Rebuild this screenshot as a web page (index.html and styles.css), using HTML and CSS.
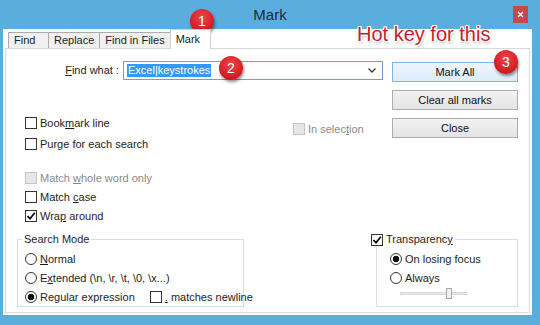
FILE: index.html
```html
<!DOCTYPE html>
<html lang="en">
<head>
    <meta charset="UTF-8">
    <title>Mark</title>
    <link rel="stylesheet" href="styles.css">
</head>
<body>
    <div class="window">
        <div class="titlebar">
            <span></span>
            <span class="title">Mark</span>
            <button class="close-btn" aria-label="Close">
                <svg width="7" height="7" viewBox="0 0 7 7"><path d="M1 1L6 6M6 1L1 6" stroke="#fff" stroke-width="1.4"/></svg>
            </button>
        </div>

        <div class="client">
            <div class="tabs">
                <div class="tab">Find</div>
                <div class="tab">Replace</div>
                <div class="tab">Find in Files</div>
                <div class="tab active">Mark</div>
            </div>

            <div class="panel">
                <div class="top">
                    <div class="main">
                        <div class="find-row">
                            <label class="find-label"><u>F</u>ind what :</label>
                            <div class="combo">
                                <span class="combo-sel">Excel|keystrokes</span>
                                <svg class="combo-arrow" width="8" height="5" viewBox="0 0 8 5"><path d="M0.5 0.5L4 4L7.5 0.5" fill="none" stroke="#333" stroke-width="1.3"/></svg>
                            </div>
                        </div>

                        <div class="opts-first">
                            <div class="opt-col">
                                <label class="check"><span class="box"></span><span>Book<u>m</u>ark line</span></label>
                                <label class="check"><span class="box"></span><span>Purge for each search</span></label>
                            </div>
                            <label class="check disabled in-sel"><span class="box"></span><span>In selec<u>t</u>ion</span></label>
                        </div>

                        <div class="opt-col opts-second">
                            <label class="check disabled"><span class="box"></span><span>Match <u>w</u>hole word only</span></label>
                            <label class="check"><span class="box"></span><span>Match <u>c</u>ase</span></label>
                            <label class="check checked"><span class="box"><svg width="10" height="10" viewBox="0 0 10 10"><path d="M1.5 5L4 7.8L8.8 1.8" fill="none" stroke="#000" stroke-width="1.7"/></svg></span><span>Wra<u>p</u> around</span></label>
                        </div>
                    </div>

                    <div class="actions">
                        <button class="btn default">Mark All</button>
                        <button class="btn">Clear all marks</button>
                        <button class="btn">Close</button>
                    </div>
                </div>

                <div class="groups">
                    <fieldset class="group search-mode">
                        <legend>Search Mode</legend>
                        <label class="radio"><span class="dot"></span><span><u>N</u>ormal</span></label>
                        <label class="radio"><span class="dot"></span><span>E<u>x</u>tended (\n, \r, \t, \0, \x...)</span></label>
                        <div class="radio-row">
                            <label class="radio checked"><span class="dot"></span><span>Regular expression</span></label>
                            <label class="check newline"><span class="box"></span><span><u>.</u> matches newline</span></label>
                        </div>
                    </fieldset>

                    <fieldset class="group transparency">
                        <legend>
                            <label class="check checked"><span class="box"><svg width="10" height="10" viewBox="0 0 10 10"><path d="M1.5 5L4 7.8L8.8 1.8" fill="none" stroke="#000" stroke-width="1.7"/></svg></span><span>Transparenc<u>y</u></span></label>
                        </legend>
                        <label class="radio checked"><span class="dot"></span><span>On losing focus</span></label>
                        <label class="radio"><span class="dot"></span><span>Always</span></label>
                        <div class="slider">
                            <div class="slider-track"></div>
                            <div class="slider-thumb"></div>
                        </div>
                    </fieldset>
                </div>
            </div>
        </div>

        <!-- annotations drawn over the screenshot -->
        <div class="badge badge-1">1</div>
        <div class="badge badge-2">2</div>
        <div class="badge badge-3">3</div>
        <div class="hotkey-note">Hot key for this</div>
    </div>
</body>
</html>
```

FILE: styles.css
```css
body {
    margin: 0;
    font-family: "Liberation Sans", Arial, sans-serif;
    font-size: 11px;
    color: #1e1e1e;
}
.window {
    position: relative;
    width: 540px;
    height: 325px;
    background-color: #5aaedd;
    display: flex;
    flex-direction: column;
    overflow: hidden;
}
.titlebar {
    height: 29px;
    display: grid;
    grid-template-columns: 1fr auto 1fr;
    align-items: center;
}
.title {
    font-size: 15px;
    color: #1f2a33;
}
.close-btn {
    justify-self: end;
    margin-right: 12px;
    width: 15px;
    height: 17px;
    padding: 0;
    border: none;
    background-color: #c7484b;
    display: flex;
    align-items: center;
    justify-content: center;
}
.client {
    flex: 1;
    margin: 0 8px 10px 3px;
    background-color: #fff;
    display: flex;
    flex-direction: column;
}
.tabs {
    height: 19px;
    display: flex;
    align-items: flex-end;
    padding-left: 5px;
}
.tab {
    box-sizing: border-box;
    min-width: 41px;
    height: 16px;
    line-height: 15px;
    padding: 0 5px;
    margin-right: -1px;
    border: 1px solid #acacac;
    border-bottom: none;
    background-color: #f0f0f0;
}
.tab.active {
    position: relative;
    z-index: 1;
    height: 20px;
    line-height: 18px;
    margin-bottom: -1px;
    background-color: #fff;
    border-color: #d0d0d0;
}
.panel {
    flex: 1;
    margin: 0 2px 2px 2px;
    border: 1px solid #d9d9d9;
    padding: 12px 11px 0 0;
}
.top {
    display: flex;
}
.main {
    flex: 1;
}
.find-row {
    display: flex;
    height: 19px;
}
.find-label {
    width: 117px;
    box-sizing: border-box;
    padding-right: 4px;
    text-align: right;
    line-height: 19px;
}
.combo {
    flex: 1;
    box-sizing: border-box;
    border: 1px solid #7a9ccf;
    padding-left: 3px;
    display: flex;
    align-items: center;
}
.combo-sel {
    background-color: #3399ff;
    color: #fff;
    line-height: 13px;
    padding: 0 1px;
}
.combo-arrow {
    margin-left: auto;
    margin-right: 6px;
}
.opts-first {
    display: flex;
    margin-top: 32px;
}
.opts-first .opt-col {
    width: 287px;
}
.opts-first .check {
    height: 21px;
}
.opt-col {
    display: flex;
    flex-direction: column;
    box-sizing: border-box;
    padding-left: 19px;
}
.opts-second {
    margin-top: 14px;
}
.in-sel {
    align-self: flex-start;
    margin-top: 6px;
}
.check,
.radio {
    display: flex;
    align-items: center;
    gap: 3px;
    height: 19px;
    white-space: nowrap;
}
.box {
    box-sizing: border-box;
    width: 12px;
    height: 12px;
    border: 1px solid #333;
    background-color: #fff;
    display: flex;
    align-items: center;
    justify-content: center;
}
.check.disabled {
    color: #8a8a8a;
}
.check.disabled .box {
    border-color: #c5c5c5;
    background-color: #e6e6e6;
}
.dot {
    box-sizing: border-box;
    width: 12px;
    height: 12px;
    border: 1px solid #333;
    border-radius: 50%;
    background-color: #fff;
}
.radio.checked .dot {
    background: radial-gradient(circle, #111 0, #111 3px, #fff 3.6px);
}
.actions {
    width: 126px;
    margin-left: 9px;
    margin-top: 1px;
    display: flex;
    flex-direction: column;
    gap: 8px;
}
.btn {
    height: 20px;
    padding: 0;
    font: inherit;
    color: #111;
    border: 1px solid #acacac;
    background: linear-gradient(#f2f2f2, #e4e4e4);
}
.btn.default {
    border-color: #7eb4ea;
    background: linear-gradient(#edf5fd, #dcecfc);
}
.groups {
    display: flex;
    justify-content: space-between;
    padding-left: 11px;
    margin-top: 8px;
}
.group {
    box-sizing: border-box;
    margin: 0;
    min-width: 0;
    border: 1px solid #dcdcdc;
    padding: 3px 0 0 7px;
}
.group legend {
    line-height: 13px;
    padding: 0 2px;
    margin-left: -3px;
}
.search-mode {
    width: 227px;
}
.radio-row {
    display: flex;
}
.newline {
    margin-left: 15px;
}
.transparency {
    width: 142px;
    padding-left: 13px;
}
.transparency legend {
    margin-left: -19px;
    padding: 0 2px 0 0;
}
.transparency legend .check {
    height: 13px;
}
.slider {
    position: relative;
    width: 67px;
    height: 12px;
    margin: 0 0 7px 10px;
    display: flex;
    align-items: center;
}
.slider-track {
    width: 100%;
    height: 3px;
    box-sizing: border-box;
    border: 1px solid #d6d6d6;
    background-color: #ececec;
}
.slider-thumb {
    position: absolute;
    left: 46px;
    top: 1px;
    width: 4px;
    height: 9px;
    border: 1px solid #a8a8a8;
    background-color: #f0f0f0;
}
.badge {
    position: absolute;
    width: 24px;
    height: 24px;
    border-radius: 50%;
    background: radial-gradient(circle at 50% 35%, #f2444a, #cf1b22 70%, #b9141b);
    color: #fff;
    font-size: 14px;
    line-height: 24px;
    text-align: center;
    box-shadow: 1px 2px 3px rgba(0, 0, 0, 0.45);
}
.badge-1 {
    left: 190px;
    top: 9px;
}
.badge-1::after {
    content: "";
    position: absolute;
    left: 12px;
    top: 24px;
    width: 1px;
    height: 12px;
    background-color: #555;
}
.badge-2 {
    left: 219px;
    top: 56px;
}
.badge-3 {
    left: 494px;
    top: 50px;
}
.hotkey-note {
    position: absolute;
    left: 357px;
    top: 23px;
    font-size: 20px;
    color: #c41e2a;
    text-shadow: 1px 0 #fff, -1px 0 #fff, 0 1px #fff, 0 -1px #fff,
        1px 1px #fff, -1px -1px #fff, 1px -1px #fff, -1px 1px #fff,
        1px 2px 3px rgba(0, 0, 0, 0.35);
}
```
